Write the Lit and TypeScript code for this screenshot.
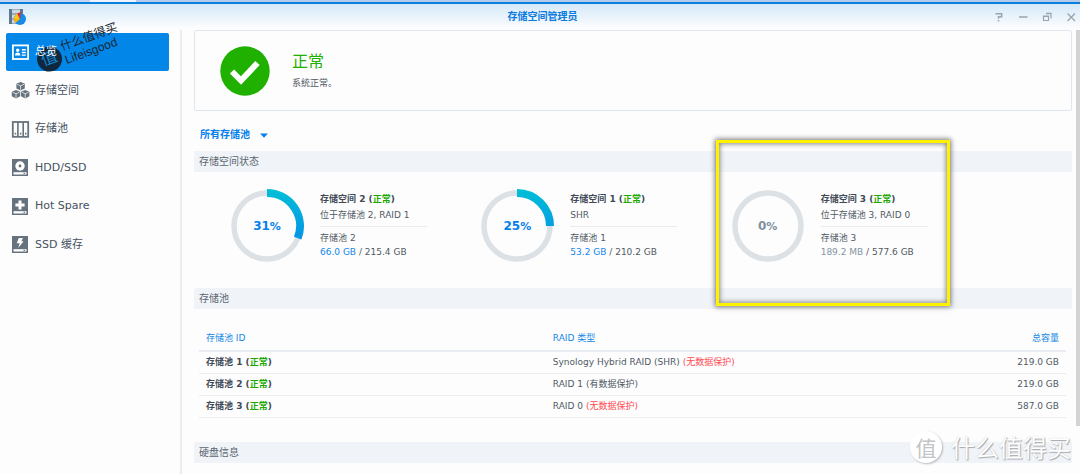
import { LitElement, html, svg, css, nothing } from "lit";
import { customElement, property } from "lit/decorators.js";

type Volume = { id: number; place: string; pool: number; used: string; total: string; percent: number };

const volumes: Volume[] = [
  { id: 2, place: "位于存储池 2, RAID 1", pool: 2, used: "66.0 GB", total: "215.4 GB", percent: 31 },
  { id: 1, place: "SHR", pool: 1, used: "53.2 GB", total: "210.2 GB", percent: 25 },
  { id: 3, place: "位于存储池 3, RAID 0", pool: 3, used: "189.2 MB", total: "577.6 GB", percent: 0 },
];

const pools = [
  { id: 1, type: "Synology Hybrid RAID (SHR)", note: "(无数据保护)", risk: true, size: "219.0 GB" },
  { id: 2, type: "RAID 1", note: "(有数据保护)", risk: false, size: "219.0 GB" },
  { id: 3, type: "RAID 0", note: "(无数据保护)", risk: true, size: "587.0 GB" },
];

const cube = (x: number, y: number) => svg`
  <g transform="translate(${x} ${y})">
    <path d="M4.2 0 8.4 1.8v4.6L4.2 8.6 0 6.4V1.8z" fill="currentColor"/>
    <path d="M.8 2.3 4.2 3.9 7.6 2.3M4.2 3.9v4.2" fill="none" stroke="#fff" stroke-width=".7"/>
  </g>`;

const drive = (mark: unknown) => svg`
  <path d="M0 0h16v17H0z" fill="currentColor"/>
  <path d="M1.5 13.2h13v2.3h-13z" fill="#fff"/>
  <path d="M11.5 13.8h1.6v1.1h-1.6z" fill="currentColor"/>
  ${mark}`;

const icons: Record<string, unknown> = {
  overview: svg`
    <rect x=".9" y="1.4" width="15.2" height="13.6" fill="none" stroke="#fff" stroke-width="1.8"/>
    <circle cx="5.7" cy="6.2" r="1.7" fill="#fff"/>
    <path d="M3 11.6c0-2 1-3.2 2.7-3.2s2.7 1.2 2.7 3.2z" fill="#fff"/>
    <path d="M9.8 5h4v1.6h-4zM9.8 7.8h4v1.4h-4zM9.8 10.4h4v1.4h-4z" fill="#fff"/>`,
  volume: svg`${cube(4.4, 0)}${cube(-0.2, 7.9)}${cube(9, 7.9)}`,
  pool: svg`
    <rect x=".8" y="1" width="15.4" height="14.8" fill="none" stroke="currentColor" stroke-width="1.8"/>
    <path d="M5.900 1v15M11.200 1v15" stroke="currentColor" stroke-width="1.600"/>
    <path d="M2.700 11.800h1.500v1.600H2.700zM7.900 11.800h1.500v1.600H7.900zM13 11.800h1.500v1.600H13z" fill="currentColor"/>`,
  disk: drive(svg`<circle cx="8" cy="7" r="4.7" fill="#fff"/><circle cx="8" cy="7" r="1.4" fill="currentColor"/>`),
  spare: drive(svg`<path d="M6.5 2.4h3v3.1h3.1v3H9.5v3.1h-3V8.500H3.400v-3h3.100z" fill="#fff"/>`),
  cache: drive(svg`<path d="M6.800 2h4.200L9.300 5.200h2.300L6.200 12l1.500-4.700H4.700z" fill="#fff"/>`),
};

@customElement("usage-ring")
export class UsageRing extends LitElement {
  @property({ type: Number }) percent = 0;

  static styles = css`
    :host { display: grid; width: 74px; height: 74px; flex: none; place-items: center; }
    .ring, .value { grid-area: 1 / 1; }
    .value { font-size: 12px; font-weight: 700; color: #057feb; }
    .value.idle { color: #82909e; }
    .sign { font-size: 11px; }
  `;

  render() {
    const r = 33;
    const angle = (this.percent / 100) * 2 * Math.PI;
    return html`
      <svg class="ring" width="74" height="74" viewBox="0 0 74 74" aria-hidden="true">
        <defs>
          <linearGradient id="g" gradientUnits="userSpaceOnUse" x1="0" y1="0" x2="0" y2="50">
            <stop offset="0" stop-color="#00bfd6"/><stop offset="1" stop-color="#0594e6"/>
          </linearGradient>
        </defs>
        <circle cx="37" cy="37" r=${r} fill="none" stroke="#dce1e5" stroke-width="5.500"/>
        ${this.percent
          ? svg`<path d=${`M37 4A33 33 0 0 1 ${37 + r * Math.sin(angle)} ${37 - r * Math.cos(angle)}`}
              fill="none" stroke="url(#g)" stroke-width="8"/>`
          : nothing}
      </svg>
      <span class="value ${this.percent ? "" : "idle"}">${this.percent}<span class="sign">%</span></span>`;
  }
}

@customElement("app-root")
export class AppRoot extends LitElement {
  static styles = css`
    :host {
      display: flex; flex-direction: column; position: relative; height: 100vh; overflow: hidden;
      background: #fdfdfe; color: #505a64;
      font: 9px/16px "DejaVu Sans", "Noto Sans CJK SC", sans-serif;
    }
    * { box-sizing: border-box; }
    button, select { font: inherit; color: inherit; background: none; border: 0; padding: 0; margin: 0; }
    svg { display: block; }

    .strip { height: 2px; flex: none; background: linear-gradient(90deg, #c3d5f2 0 90px, #edf4fd 90px 136px, #b4cbed 136px); }
    .titlebar {
      display: grid; grid-template-columns: 1fr auto 1fr; align-items: center; flex: none;
      height: 27px; padding: 0 3px 0 8px; border-top: 2px solid #0a80dc;
      background: linear-gradient(#d5e9f8, #fdfdfe);
    }
    .title { margin: 0; font-size: 10px; font-weight: 700; color: #0a7be0; }
    .tools { display: flex; justify-content: flex-end; gap: 12px; color: #98a4ae; }
    .tool { width: 12px; height: 12px; }

    .body { display: flex; flex: 1; min-height: 0; }
    .side {
      display: grid; grid-auto-rows: 1fr; align-content: start; align-items: center; flex: none;
      width: 182px; height: 234px; padding: 3px 11px 0 6px; border-right: 2px solid #ebecee; box-sizing: border-box;
    }
    .rail { flex: none; border-right: 2px solid #ebecee; margin-top: 1px; }
    .rail .side { border-right: 0; width: 180px; }
    .nav {
      display: flex; align-items: center; gap: 6px; height: 38px; padding: 0 7px 0 6px;
      border-radius: 2px; font-size: 11px; color: #465260; text-decoration: none;
    }
    .nav.active { background: #0286e8; color: #fff; }
    .label { position: relative; z-index: 2; }
    .glyph { color: #66727e; flex: none; overflow: visible; }

    .main { flex: 1; min-width: 0; padding: 0 4px 0 12px; margin-top: 1px; overflow: hidden; }
    .health {
      display: flex; align-items: center; gap: 22px; height: 81px; padding-left: 25px;
      border: 1px solid #e0e6ee; border-radius: 2px;
    }
    .state { margin: 0; font-size: 16px; line-height: 24px; font-weight: 400; color: #20b000; }
    .detail { margin: 0; line-height: 18px; }
    .filter { display: flex; align-items: center; gap: 10px; height: 20px; margin: 14px 0 6px 6px; font-size: 10px; font-weight: 700; color: #057feb; }
    .pick { appearance: none; width: 50px; height: 20px; }
    .band { margin: 0; height: 21px; padding-left: 5px; background: #f0f4f8; font-size: 10px; line-height: 21px; font-weight: 400; color: #5b6671; }

    .volumes { display: grid; grid-template-columns: repeat(3, 1fr); padding: 17px 91px 25px 36px; }
    .volume { position: relative; display: flex; align-items: flex-start; gap: 16px; }
    .info { width: 107px; white-space: nowrap; padding-top: 2px; }
    .name { margin: 0; font-size: 9px; font-weight: 700; color: #3f4a56; }
    .ok { color: #20a800; }
    .place { margin: 0; padding-bottom: 3px; border-bottom: 1px solid #e8ecf0; }
    .pool { margin: 4px 0 0; line-height: 14px; }
    .used { color: #1388ea; }
    .used.idle { color: #8594a2; }
    .callout {
      position: absolute; left: -15px; top: -49px; width: 234px; height: 166px;
      border: 3px solid #fff200; box-shadow: 0 0 5px 1px #777, inset 0 0 5px 1px #888; pointer-events: none;
    }

    .wrap { padding: 18px 6px 24px 5px; }
    .pools { width: 100%; border-collapse: collapse; table-layout: fixed; }
    .pools th { height: 24px; padding: 0 7px 1px; border-bottom: 2px solid #eaeef4; text-align: left; font-weight: 400; color: #1489e6; }
    .pools td { height: 22px; padding: 0 7px; border-bottom: 1px solid #eaeef2; }
    .pools .num { text-align: right; }
    .first { width: 40%; }
    .pools .id { font-weight: 700; color: #3f4a56; }
    .risk { color: #ff4b50; }

    .scroll { flex: none; width: 4px; height: 396px; margin-top: 1px; background: #d3d3d5; }

    .stamp { position: absolute; left: 35px; top: 34px; display: flex; align-items: center; gap: 2px; transform: rotate(-20deg); color: #1c2733; font: 12px/14px "Liberation Sans", "Noto Sans CJK SC", sans-serif; pointer-events: none; }
    .seal { display: grid; place-items: center; width: 25px; height: 25px; border-radius: 50%; background: #10283d; color: #1683ce; font-size: 16px; }
    .brand { position: absolute; right: 9px; bottom: 11px; display: flex; align-items: center; gap: 9px; pointer-events: none; font: 24px/32px "Noto Sans CJK SC", sans-serif; color: #fff; text-shadow: 1px 1px 1px #a4a8ac, 0 0 1px #b8bcc0; }
    .coin { display: grid; place-items: center; width: 32px; height: 32px; border-radius: 50%; background: #fff; color: #c2c4c6; font-size: 21px; box-shadow: 1px 1px 2px #b4b8bc; text-shadow: none; }
  `;

  private nav(icon: string, label: string, active = false) {
    return html`<a class="nav ${active ? "active" : ""}" href="#${icon}" aria-current=${active ? "page" : nothing}>
      <svg class="glyph" width="17" height="17" viewBox="0 0 17 17" aria-hidden="true">${icons[icon]}</svg><span class="label">${label}</span></a>`;
  }

  render() {
    return html`
      <div class="strip"></div>
      <header class="titlebar">
        <svg width="18" height="18" viewBox="0 0 18 18" aria-hidden="true">
          <path d="M1 1h14v15H1z" fill="#9badbd"/>
          <path d="M1 1h3v15H1zM12 1h3v5h-3z" fill="#5f7890"/>
          <path d="M4 2h8v3H4zM4 7h8v3H4zM4 12h8v3H4z" fill="#ccd8e2"/>
          <circle cx="12" cy="11" r="6" fill="#168ce8"/>
          <path d="M12 11H6a6 6 0 0 1 3.500-5.400z" fill="#ffc316"/>
          <path d="M12 11 9.300 5.500A6 6 0 0 1 13 4.600z" fill="#e52b24"/>
          <path d="M6 11h6l-4.500 4A6 6 0 0 1 6 11z" fill="#ffb400"/>
        </svg>
        <h1 class="title">存储空间管理员</h1>
        <div class="tools">
          <button class="tool" aria-label="帮助"><svg width="12" height="12" viewBox="0 0 12 12" fill="none" stroke="currentColor" stroke-width="1.500"><path d="M2.500 2.800h6.200v3H5.500v2M5.500 9v1.500"/></svg></button>
          <button class="tool" aria-label="最小化"><svg width="12" height="12" viewBox="0 0 12 12" fill="none" stroke="currentColor" stroke-width="1.500"><path d="M2 6h8.500"/></svg></button>
          <button class="tool" aria-label="还原"><svg width="12" height="12" viewBox="0 0 12 12" fill="none" stroke="currentColor" stroke-width="1.200"><path d="M2.500 5h5v4.500h-5zM2 5.300h6M5 2.300h5v5.200M5 2.600h5"/></svg></button>
          <button class="tool" aria-label="关闭"><svg width="12" height="12" viewBox="0 0 12 12" fill="none" stroke="currentColor" stroke-width="1.300"><path d="m2.500 2.500 7.500 7.500M10 2.500 2.500 10"/></svg></button>
        </div>
      </header>

      <div class="body">
        <div class="rail">
          <nav class="side">
            ${this.nav("overview", "总览", true)}
            ${this.nav("volume", "存储空间")}
            ${this.nav("pool", "存储池")}
            ${this.nav("disk", "HDD/SSD")}
            ${this.nav("spare", "Hot Spare")}
            ${this.nav("cache", "SSD 缓存")}
          </nav>
        </div>

        <main class="main">
          <section class="health">
            <svg width="50" height="50" viewBox="0 0 50 50" aria-hidden="true">
              <circle cx="25" cy="25" r="24.700" fill="#20b000"/>
              <path d="m12 25.500 9 9L37.500 17" fill="none" stroke="#fff" stroke-width="6"/>
            </svg>
            <div>
              <h2 class="state">正常</h2>
              <p class="detail">系统正常。</p>
            </div>
          </section>

          <div class="filter">
            <select class="pick" aria-label="存储池筛选"><option>所有存储池</option></select>
            <svg width="8" height="5" viewBox="0 0 8 5" aria-hidden="true"><path d="M0 .5h8L4 4.800z" fill="currentColor"/></svg>
          </div>

          <h2 class="band">存储空间状态</h2>
          <div class="volumes">
            ${volumes.map((v) => html`
              <article class="volume">
                <usage-ring .percent=${v.percent}></usage-ring>
                <div class="info">
                  <h3 class="name">存储空间 ${v.id} (<span class="ok">正常</span>)</h3>
                  <p class="place">${v.place}</p>
                  <p class="pool">存储池 ${v.pool}<br><span class="used ${v.percent ? "" : "idle"}">${v.used}</span> / ${v.total}</p>
                </div>
                ${v.id === 3 ? html`<div class="callout"></div>` : nothing}
              </article>`)}
          </div>

          <h2 class="band">存储池</h2>
          <div class="wrap">
            <table class="pools">
              <thead><tr><th class="first">存储池 ID</th><th>RAID 类型</th><th class="num">总容量</th></tr></thead>
              <tbody>
                ${pools.map((p) => html`<tr>
                  <td class="id">存储池 ${p.id} (<span class="ok">正常</span>)</td>
                  <td>${p.type} <span class=${p.risk ? "risk" : ""}>${p.note}</span></td>
                  <td class="num">${p.size}</td>
                </tr>`)}
              </tbody>
            </table>
          </div>

          <h2 class="band">硬盘信息</h2>
        </main>
        <div class="scroll"></div>
      </div>

      <div class="stamp"><span class="seal">值</span><span>什么值得买<br>Lifeisgood</span></div>
      <div class="brand"><span class="coin">值</span>什么值得买</div>
    `;
  }
}
